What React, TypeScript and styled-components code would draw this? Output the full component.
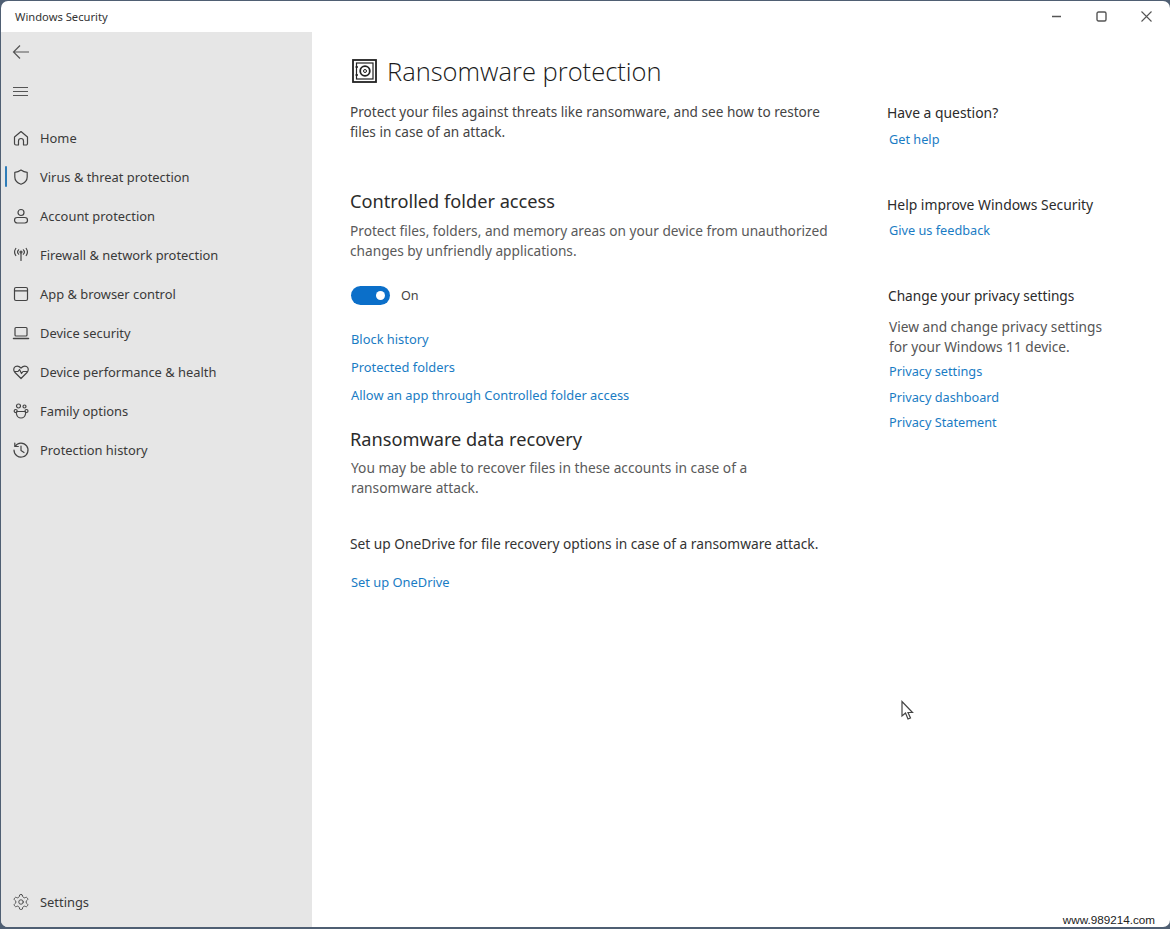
import React from 'react';
import styled, { createGlobalStyle } from 'styled-components';

const GlobalStyle = createGlobalStyle`
  html, body {
    margin: 0;
    padding: 0;
    height: 100%;
    background: #4f5f73;
  }
  #root {
    height: 100%;
  }
`;

const Desktop = styled.div`
  width: 1170px;
  height: 929px;
  box-sizing: border-box;
  padding: 1px 0 2px 1px;
  position: relative;
  overflow: hidden;
  font-family: 'Noto Sans', 'Open Sans', sans-serif;
`;

const Window = styled.div`
  width: 100%;
  height: 100%;
  display: flex;
  flex-direction: column;
  background: #fff;
  border-radius: 7px;
  overflow: hidden;
`;

const TitleBar = styled.div`
  flex: 0 0 31px;
  display: flex;
  align-items: center;
  justify-content: space-between;
  padding-left: 14px;
  font-size: 11.2px;
  color: #333;
`;

const WindowButtons = styled.div`
  display: flex;
  padding-right: 1px;
`;

const WindowButton = styled.div`
  width: 45px;
  height: 31px;
  display: flex;
  align-items: center;
  justify-content: center;
  color: #555;
`;

const Body = styled.div`
  flex: 1;
  display: flex;
  min-height: 0;
`;

const Sidebar = styled.aside`
  width: 311px;
  flex: none;
  background: #e6e6e6;
  display: flex;
  flex-direction: column;
  box-sizing: border-box;
`;

const IconButton = styled.div<{ $gap?: number }>`
  height: 39px;
  display: flex;
  align-items: center;
  padding-left: 11px;
  margin-top: ${({ $gap }) => $gap ?? 0}px;
  color: #555;
`;

const NavList = styled.nav`
  margin-top: 7px;
  display: flex;
  flex-direction: column;
  flex: 1;
`;

const NavRow = styled.div<{ $active?: boolean; $bottom?: boolean }>`
  height: 39px;
  flex: none;
  display: flex;
  align-items: center;
  gap: 10px;
  padding-left: 11px;
  position: relative;
  font-size: 12.9px;
  color: #3a3a3a;
  margin-top: ${({ $bottom }) => ($bottom ? 'auto' : '0')};
  margin-bottom: ${({ $bottom }) => ($bottom ? '6px' : '0')};

  &::before {
    content: '';
    display: ${({ $active }) => ($active ? 'block' : 'none')};
    position: absolute;
    left: 4px;
    top: 9px;
    width: 2px;
    height: 21px;
    background: #2e7cb8;
    border-radius: 1px;
  }
`;

const NavIcon = styled.svg`
  width: 18px;
  height: 18px;
  flex: none;
  fill: none;
  stroke: #444;
  stroke-width: 1.2;
  stroke-linecap: round;
  stroke-linejoin: round;
`;

const Content = styled.main`
  flex: 1;
  display: flex;
  padding-left: 38px;
  min-width: 0;
`;

const MainColumn = styled.div`
  width: 538px;
  flex: none;
  padding-top: 20px;
`;

const PageTitle = styled.h1`
  margin: 0 0 0 2px;
  display: flex;
  align-items: center;
  gap: 10px;
  height: 38px;
  font-size: 25.5px;
  font-weight: 300;
  color: #1a1a1a;
  font-family: 'Open Sans', 'Noto Sans', sans-serif;
`;

const Paragraph = styled.p<{ $top?: number; $tone?: string; $indent?: number; $size?: number }>`
  margin: ${({ $top }) => $top ?? 0}px 0 0 ${({ $indent }) => $indent ?? 0}px;
  font-size: ${({ $size }) => $size ?? 13.68}px;
  line-height: 20px;
  color: ${({ $tone }) => $tone ?? '#5a5a5a'};
`;

const SectionTitle = styled.h2<{ $top: number }>`
  margin: ${({ $top }) => $top}px 0 0;
  font-size: 18.2px;
  line-height: 24px;
  font-weight: 400;
  color: #2b2b2b;
`;

const ToggleRow = styled.div`
  margin: 24px 0 0 1px;
  display: flex;
  align-items: center;
  gap: 11px;
  height: 20px;
  font-size: 12.6px;
  color: #444;
`;

const Toggle = styled.div`
  width: 39px;
  height: 19px;
  border-radius: 10px;
  background: #0b6fc9;
  position: relative;

  &::after {
    content: '';
    position: absolute;
    right: 5px;
    top: 5px;
    width: 9px;
    height: 9px;
    border-radius: 50%;
    background: #fff;
  }
`;

const LinkList = styled.div<{ $top: number }>`
  margin: ${({ $top }) => $top}px 0 0 1px;
  display: flex;
  flex-direction: column;
`;

const TextLink = styled.a`
  font-size: 12.87px;
  line-height: 28px;
  height: 28px;
  color: #1a7cc4;
`;

const Side = styled.aside`
  width: 270px;
  flex: none;
  padding-top: 71px;
  margin-left: -1px;
`;

const SideBlock = styled.section<{ $top?: number; $inset?: number }>`
  margin-top: ${({ $top }) => $top ?? 0}px;
  padding-left: ${({ $inset }) => $inset ?? 0}px;
`;

const SideTitle = styled.h3<{ $size?: number }>`
  margin: 0;
  font-size: ${({ $size }) => $size ?? 13.9}px;
  line-height: 20px;
  font-weight: 400;
  color: #2b2b2b;
`;

const SideLinks = styled.div<{ $top: number; $left: number }>`
  margin-top: ${({ $top }) => $top}px;
  margin-left: ${({ $left }) => $left}px;
  display: flex;
  flex-direction: column;
`;

const SideLink = styled(TextLink)`
  font-size: 12.72px;
  line-height: 25.5px;
  height: 25.5px;
`;

const SideText = styled.p`
  margin: 11px 0 0 1px;
  font-size: 13.7px;
  line-height: 20px;
  color: #555;
`;

const Cursor = styled.svg`
  position: absolute;
  left: 900px;
  top: 700px;
  width: 15px;
  height: 21px;
`;

const Watermark = styled.div`
  position: absolute;
  right: 14px;
  bottom: 2px;
  padding: 0 1px;
  height: 15px;
  line-height: 16px;
  font-family: 'Liberation Sans', Arial, sans-serif;
  font-size: 11.7px;
  color: #222;
  background: #fff;
`;

const navItems: { label: string; icon: React.ReactNode; active?: boolean }[] = [
  {
    label: 'Home',
    icon: <path d="M2.5 8 9 2.5 15.5 8v6.5a1.5 1.5 0 0 1-1.5 1.5h-2.5v-4a2.5 2.5 0 0 0-5 0v4H4a1.5 1.5 0 0 1-1.5-1.5z" />,
  },
  {
    label: 'Virus & threat protection',
    active: true,
    icon: <path d="M9 2c2 1.5 4 2.2 6.2 2.3V9c0 3.5-2.3 5.8-6.2 7.2C5.1 14.8 2.8 12.5 2.8 9V4.300C5 4.200 7 3.500 9 2z" />,
  },
  {
    label: 'Account protection',
    icon: (
      <>
        <circle cx="9" cy="5.500" r="3" />
        <rect x="2.500" y="10.500" width="13" height="5.500" rx="2.700" />
      </>
    ),
  },
  {
    label: 'Firewall & network protection',
    icon: (
      <>
        <circle cx="9" cy="6" r="1" />
        <path d="M9 7v7.500M6.600 3.800a3.200 3.200 0 0 0 0 4.400M11.400 3.800a3.200 3.200 0 0 1 0 4.400M3.800 2.500a6 6 0 0 0 0 7M14.200 2.500a6 6 0 0 1 0 7" />
      </>
    ),
  },
  {
    label: 'App & browser control',
    icon: (
      <>
        <rect x="2.500" y="2.500" width="13" height="13" rx="1.500" />
        <path d="M2.500 5.800h13" />
      </>
    ),
  },
  {
    label: 'Device security',
    icon: (
      <>
        <rect x="3" y="3.500" width="12" height="8.500" rx="1" />
        <path d="M1.500 14.500h15" strokeWidth="1.500" />
      </>
    ),
  },
  {
    label: 'Device performance & health',
    icon: <path d="M9 15.500 3 9.500C1 7.500 1.500 4.500 3.500 3.500c2-1 4 0 5.500 1.500 1.500-1.500 3.500-2.500 5.500-1.500s2.500 4 .5 6zM2.500 8.500h3.500l1.500-2 2 4 1.500-2h4.500" />,
  },
  {
    label: 'Family options',
    icon: (
      <>
        <circle cx="6.500" cy="4" r="2" />
        <circle cx="12.500" cy="4.500" r="1.500" />
        <circle cx="3.700" cy="9" r="1.500" />
        <circle cx="14.500" cy="9" r="1.500" />
        <path d="M5 9.500h8a2 2 0 0 1 .500 2.500c-.5 2.500-2.300 4-4.500 4s-4-1.500-4.500-4A2 2 0 0 1 5 9.500z" />
      </>
    ),
  },
  {
    label: 'Protection history',
    icon: (
      <>
        <path d="M3.200 5.200A7 7 0 1 1 2 9" />
        <path d="M2.800 2v3.500h3.500M9 5v4.500l3 2" />
      </>
    ),
  },
];

const App: React.FC = () => {
  return (
    <Desktop>
      <GlobalStyle />
      <Window>
        <TitleBar>
          Windows Security
          <WindowButtons>
            <WindowButton>
              <svg width="9" height="11" viewBox="0 0 9 11">
                <path d="M0 5.500h9" stroke="currentColor" strokeWidth="1.300" />
              </svg>
            </WindowButton>
            <WindowButton>
              <svg width="11" height="11" viewBox="0 0 11 11" fill="none">
                <rect x="1" y="1" width="9" height="9" rx="1.500" stroke="currentColor" strokeWidth="1.400" />
              </svg>
            </WindowButton>
            <WindowButton>
              <svg width="11" height="11" viewBox="0 0 11 11">
                <path d="M0.500 0.500l10 10M10.500 0.500l-10 10" stroke="currentColor" strokeWidth="1.100" />
              </svg>
            </WindowButton>
          </WindowButtons>
        </TitleBar>
        <Body>
          <Sidebar>
            <IconButton>
              <svg width="18" height="16" viewBox="0 0 18 16" fill="none" stroke="currentColor" strokeWidth="1.200">
                <path d="M17 8H1.500M8 1.500 1.500 8 8 14.500" />
              </svg>
            </IconButton>
            <IconButton $gap={1}>
              <svg width="18" height="12" viewBox="0 0 18 12" fill="none" stroke="currentColor" strokeWidth="1.200">
                <path d="M1 1.500h15M1 5.500h15M1 9.500h15" />
              </svg>
            </IconButton>
            <NavList>
              {navItems.map((item) => (
                <NavRow key={item.label} $active={item.active}>
                  <NavIcon viewBox="0 0 18 18">{item.icon}</NavIcon>
                  {item.label}
                </NavRow>
              ))}
              <NavRow $bottom>
                <NavIcon viewBox="0 0 24 24">
                  <circle cx="12" cy="12" r="3" />
                  <path d="M12.220 2h-.44a2 2 0 0 0-2 2v.180a2 2 0 0 1-1 1.730l-.43.250a2 2 0 0 1-2 0l-.150-.080a2 2 0 0 0-2.730.730l-.220.380a2 2 0 0 0 .730 2.730l.150.100a2 2 0 0 1 1 1.720v.510a2 2 0 0 1-1 1.740l-.150.090a2 2 0 0 0-.730 2.730l.220.380a2 2 0 0 0 2.730.730l.150-.080a2 2 0 0 1 2 0l.430.250a2 2 0 0 1 1 1.730V20a2 2 0 0 0 2 2h.440a2 2 0 0 0 2-2v-.180a2 2 0 0 1 1-1.730l.430-.250a2 2 0 0 1 2 0l.150.080a2 2 0 0 0 2.730-.730l.220-.390a2 2 0 0 0-.730-2.730l-.150-.080a2 2 0 0 1-1-1.740v-.500a2 2 0 0 1 1-1.740l.150-.090a2 2 0 0 0 .730-2.730l-.220-.380a2 2 0 0 0-2.730-.730l-.150.080a2 2 0 0 1-2 0l-.430-.250a2 2 0 0 1-1-1.730V4a2 2 0 0 0-2-2z" />
                </NavIcon>
                Settings
              </NavRow>
            </NavList>
          </Sidebar>
          <Content>
            <MainColumn>
              <PageTitle>
                <svg width="25" height="24" viewBox="0 0 25 24" fill="none" stroke="#222">
                  <rect x="1" y="1" width="23" height="22" strokeWidth="1.800" />
                  <rect x="4.500" y="4" width="16.500" height="16" strokeWidth="1.200" />
                  <path d="M3.500 8h2.500M3.500 16h2.500" strokeWidth="1.400" />
                  <circle cx="13" cy="12" r="4.800" strokeWidth="1.800" />
                  <circle cx="13" cy="12" r="1.500" strokeWidth="1" />
                </svg>
                Ransomware protection
              </PageTitle>
              <Paragraph $top={12} $tone="#444" $size={13.6}>
                Protect your files against threats like ransomware, and see how to restore
                <br />
                files in case of an attack.
              </Paragraph>
              <SectionTitle $top={47}>Controlled folder access</SectionTitle>
              <Paragraph $top={8}>
                Protect files, folders, and memory areas on your device from unauthorized
                <br />
                changes by unfriendly applications.
              </Paragraph>
              <ToggleRow>
                <Toggle />
                On
              </ToggleRow>
              <LinkList $top={20}>
                <TextLink>Block history</TextLink>
                <TextLink>Protected folders</TextLink>
                <TextLink>Allow an app through Controlled folder access</TextLink>
              </LinkList>
              <SectionTitle $top={18}>Ransomware data recovery</SectionTitle>
              <Paragraph $top={7} $indent={1} $size={13.75}>
                You may be able to recover files in these accounts in case of a
                <br />
                ransomware attack.
              </Paragraph>
              <Paragraph $top={36} $tone="#333" $size={13.74}>
                Set up OneDrive for file recovery options in case of a ransomware attack.
              </Paragraph>
              <LinkList $top={14}>
                <TextLink>Set up OneDrive</TextLink>
              </LinkList>
            </MainColumn>
            <Side>
              <SideBlock>
                <SideTitle>Have a question?</SideTitle>
                <SideLinks $top={4} $left={2}>
                  <SideLink>Get help</SideLink>
                </SideLinks>
              </SideBlock>
              <SideBlock $top={42}>
                <SideTitle>Help improve Windows Security</SideTitle>
                <SideLinks $top={3} $left={2}>
                  <SideLink>Give us feedback</SideLink>
                </SideLinks>
              </SideBlock>
              <SideBlock $top={43} $inset={1}>
                <SideTitle $size={13.7}>Change your privacy settings</SideTitle>
                <SideText>
                  View and change privacy settings
                  <br />
                  for your Windows 11 device.
                </SideText>
                <SideLinks $top={2} $left={1}>
                  <SideLink>Privacy settings</SideLink>
                  <SideLink>Privacy dashboard</SideLink>
                  <SideLink>Privacy Statement</SideLink>
                </SideLinks>
              </SideBlock>
            </Side>
          </Content>
        </Body>
      </Window>
      <Cursor viewBox="0 0 15 21">
        <path d="M2 1.500V16l3.500-3 2.500 6 2.500-1-2.500-5.500h4.500z" fill="#fff" stroke="#444" strokeWidth="1.200" />
      </Cursor>
      <Watermark>www.989214.com</Watermark>
    </Desktop>
  );
};

export default App;
